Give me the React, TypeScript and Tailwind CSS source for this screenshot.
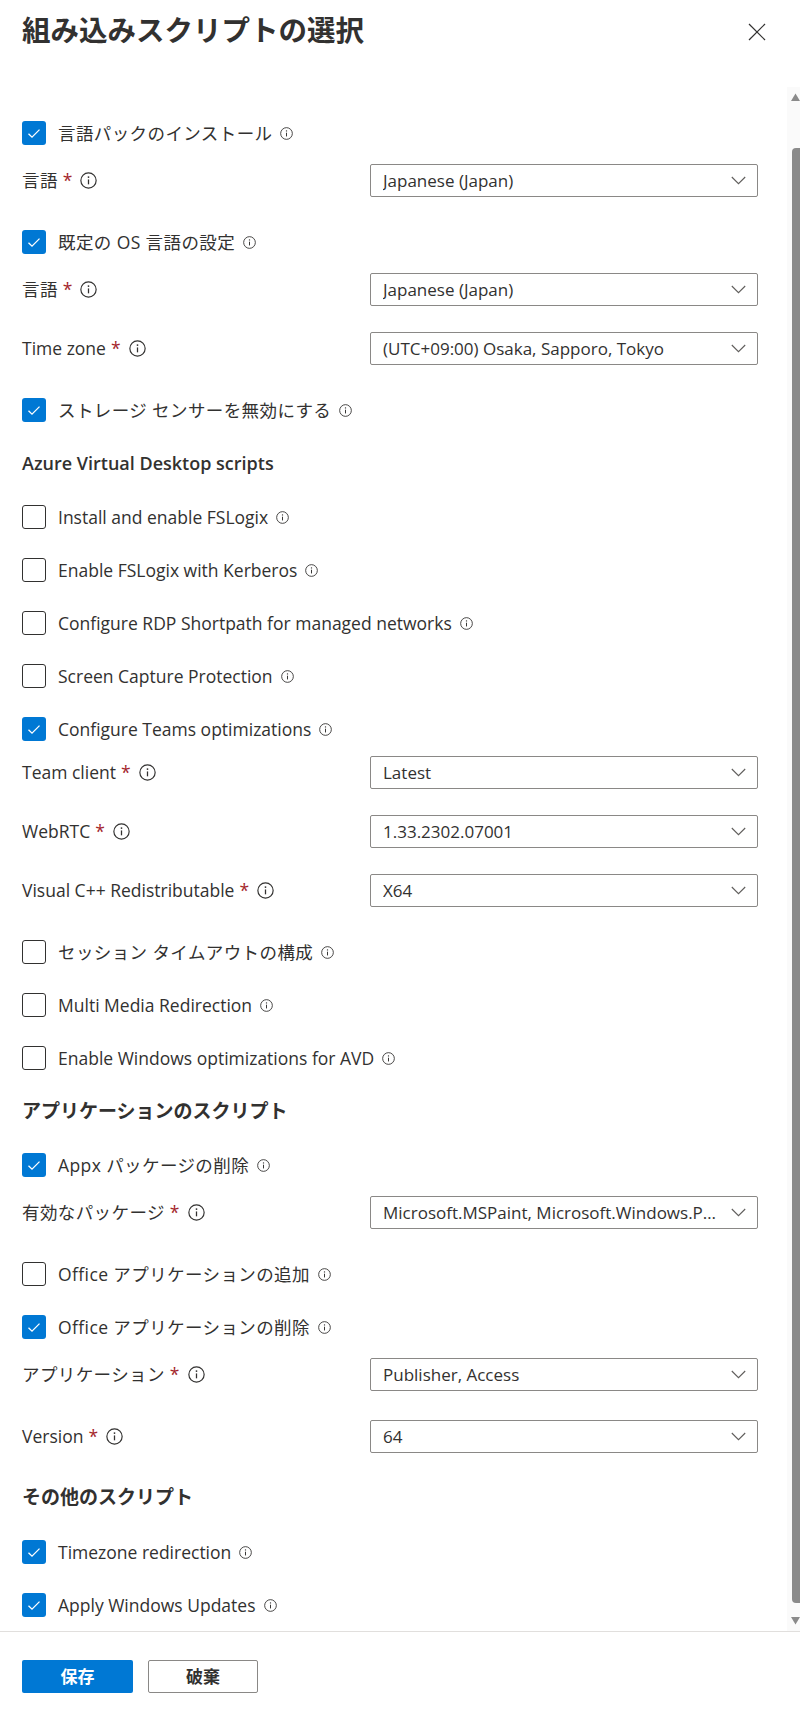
import React from "react";

type Row =
  | { kind: "cb"; label: string; checked: boolean; gap?: string }
  | { kind: "sel"; label: string; value: string; gap?: string }
  | { kind: "h"; label: string; gap?: string };

const rows: Row[] = [
  { kind: "cb", label: "言語パックのインストール", checked: true },
  { kind: "sel", label: "言語", value: "Japanese (Japan)" },
  { kind: "cb", label: "既定の OS 言語の設定", checked: true },
  { kind: "sel", label: "言語", value: "Japanese (Japan)" },
  { kind: "sel", label: "Time zone", value: "(UTC+09:00) Osaka, Sapporo, Tokyo" },
  { kind: "cb", label: "ストレージ センサーを無効にする", checked: true },
  { kind: "h", label: "Azure Virtual Desktop scripts" },
  { kind: "cb", label: "Install and enable FSLogix", checked: false },
  { kind: "cb", label: "Enable FSLogix with Kerberos", checked: false },
  { kind: "cb", label: "Configure RDP Shortpath for managed networks", checked: false },
  { kind: "cb", label: "Screen Capture Protection", checked: false },
  { kind: "cb", label: "Configure Teams optimizations", checked: true },
  { kind: "sel", label: "Team client", value: "Latest", gap: "mt-[15px]" },
  { kind: "sel", label: "WebRTC", value: "1.33.2302.07001" },
  { kind: "sel", label: "Visual C++ Redistributable", value: "X64" },
  { kind: "cb", label: "セッション タイムアウトの構成", checked: false },
  { kind: "cb", label: "Multi Media Redirection", checked: false },
  { kind: "cb", label: "Enable Windows optimizations for AVD", checked: false },
  { kind: "h", label: "アプリケーションのスクリプト" },
  { kind: "cb", label: "Appx パッケージの削除", checked: true },
  {
    kind: "sel",
    label: "有効なパッケージ",
    value: "Microsoft.MSPaint, Microsoft.Windows.Photos, Microsoft.ZuneMusic",
  },
  { kind: "cb", label: "Office アプリケーションの追加", checked: false },
  { kind: "cb", label: "Office アプリケーションの削除", checked: true },
  { kind: "sel", label: "アプリケーション", value: "Publisher, Access" },
  { kind: "sel", label: "Version", value: "64", gap: "mt-[29px]" },
  { kind: "h", label: "その他のスクリプト", gap: "mt-[32px]" },
  { kind: "cb", label: "Timezone redirection", checked: true, gap: "mt-[31px]" },
  { kind: "cb", label: "Apply Windows Updates", checked: true },
];

// spacing between rows depends on what came before
const gaps: Record<string, string> = {
  "cb-cb": "mt-[29px]",
  "cb-sel": "mt-[19px]",
  "sel-sel": "mt-[26px]",
  "sel-cb": "mt-[33px]",
  "sel-h": "mt-[33px]",
  "cb-h": "mt-[29px]",
  "h-cb": "mt-[30px]",
};

const hasJp = (s: string) => /[\u3040-\u30ff\u4e00-\u9fff]/.test(s);

const Info = ({ size }: { size: number }) => (
  <svg width={size} height={size} viewBox="0 0 16 16" className="shrink-0">
    <circle cx="8" cy="8" r="7.2" fill="none" stroke="#323130" strokeWidth="1.1" />
    <line x1="8" y1="7" x2="8" y2="11.6" stroke="#323130" strokeWidth="1.2" />
    <circle cx="8" cy="4.8" r="0.85" fill="#323130" />
  </svg>
);

const Chevron = () => (
  <svg width="15" height="9" viewBox="0 0 15 9" className="shrink-0">
    <polyline points="0.8,1 7.5,7.7 14.2,1" fill="none" stroke="#605e5c" strokeWidth="1.1" />
  </svg>
);

const Check = ({ label, checked, className }: { label: string; checked: boolean; className: string }) => (
  <div className={`flex items-center h-[24px] ${className}`}>
    {checked ? (
      <span className="w-[24px] h-[24px] rounded-[3px] bg-[#0078d4] flex items-center justify-center shrink-0">
        <svg width="14" height="11" viewBox="0 0 14 11">
          <polyline points="1.5,5.8 5,9.2 12.5,1.6" fill="none" stroke="#ffffff" strokeWidth="1.3" />
        </svg>
      </span>
    ) : (
      <span className="w-[24px] h-[24px] rounded-[3px] border border-[#323130] bg-white shrink-0" />
    )}
    <span
      className={`ml-[12px] text-[17.5px] text-[#323130] whitespace-nowrap ${hasJp(label) ? "tracking-[0.4px]" : ""}`}
    >
      {label}
    </span>
    <span className="ml-[8px] flex">
      <Info size={13} />
    </span>
  </div>
);

const Field = ({ label, value, className }: { label: string; value: string; className: string }) => (
  <div className={`flex items-center h-[33px] ${className}`}>
    <div className="w-[348px] flex items-center text-[17.5px] text-[#323130]">
      <span className={`whitespace-nowrap ${hasJp(label) ? "tracking-[0.4px]" : ""}`}>{label}</span>
      <span className="ml-[5px] text-[#a4262c]">*</span>
      <span className="ml-[8px] flex">
        <Info size={17} />
      </span>
    </div>
    <div className="w-[388px] h-[33px] border border-[#8a8886] rounded-[2px] flex items-center pl-[12px] pr-[11px] bg-white">
      <span className="flex-1 min-w-0 truncate text-[17px] text-[#323130] pr-[10px]">{value}</span>
      <Chevron />
    </div>
  </div>
);

const Heading = ({ label, className }: { label: string; className: string }) => (
  <div
    className={`flex items-center h-[24px] font-semibold text-[#323130] ${
      hasJp(label) ? "text-[19px]" : "text-[18px]"
    } ${className}`}
  >
    {label}
  </div>
);

export default function App() {
  return (
    <div className="w-[800px] h-[1713px] bg-white flex flex-col font-['Open_Sans','Noto_Sans_CJK_JP',sans-serif]">
      {/* header */}
      <div className="h-[87px] shrink-0 flex justify-between items-start pl-[22px] pr-[34px] pt-[13px]">
        <h1 className="text-[28.5px] leading-[34px] font-semibold text-[#323130]">組み込みスクリプトの選択</h1>
        <svg width="18" height="18" viewBox="0 0 18 18" className="mt-[10px]">
          <line x1="1" y1="1" x2="17" y2="17" stroke="#323130" strokeWidth="1.2" />
          <line x1="17" y1="1" x2="1" y2="17" stroke="#323130" strokeWidth="1.2" />
        </svg>
      </div>

      {/* form body with scrollbar */}
      <div className="flex-1 min-h-0 flex">
        <div className="flex-1 pl-[22px] pt-[34px]">
          {rows.map((row, i) => {
            const prev = i > 0 ? rows[i - 1].kind : "";
            const gap = i === 0 ? "" : row.gap ?? gaps[`${prev}-${row.kind}`] ?? "";
            if (row.kind === "cb") return <Check key={i} label={row.label} checked={row.checked} className={gap} />;
            if (row.kind === "sel") return <Field key={i} label={row.label} value={row.value} className={gap} />;
            return <Heading key={i} label={row.label} className={gap} />;
          })}
        </div>
        <div className="w-[13px] bg-[#fafafa] flex flex-col items-end">
          <svg width="9" height="8" viewBox="0 0 9 8" className="mt-[6px]">
            <polygon points="4.5,0.5 9,8 0,8" fill="#8a8a8a" />
          </svg>
          <div className="mt-[47px] w-[8px] h-[1455px] bg-[#8a8a8a] rounded-l-[4px]" />
          <svg width="9" height="8" viewBox="0 0 9 8" className="mt-[14px]">
            <polygon points="0,0 9,0 4.5,7.5" fill="#8a8a8a" />
          </svg>
        </div>
      </div>

      {/* footer */}
      <div className="h-[82px] shrink-0 border-t border-[#e1dfdd] flex items-start pl-[22px] pt-[28px] gap-[15px]">
        <button className="w-[111px] h-[33px] bg-[#0078d4] rounded-[2px] text-white text-[17px] font-bold">保存</button>
        <button className="w-[110px] h-[33px] bg-white border border-[#8a8886] rounded-[2px] text-[#323130] text-[17px] font-bold">
          破棄
        </button>
      </div>
    </div>
  );
}
